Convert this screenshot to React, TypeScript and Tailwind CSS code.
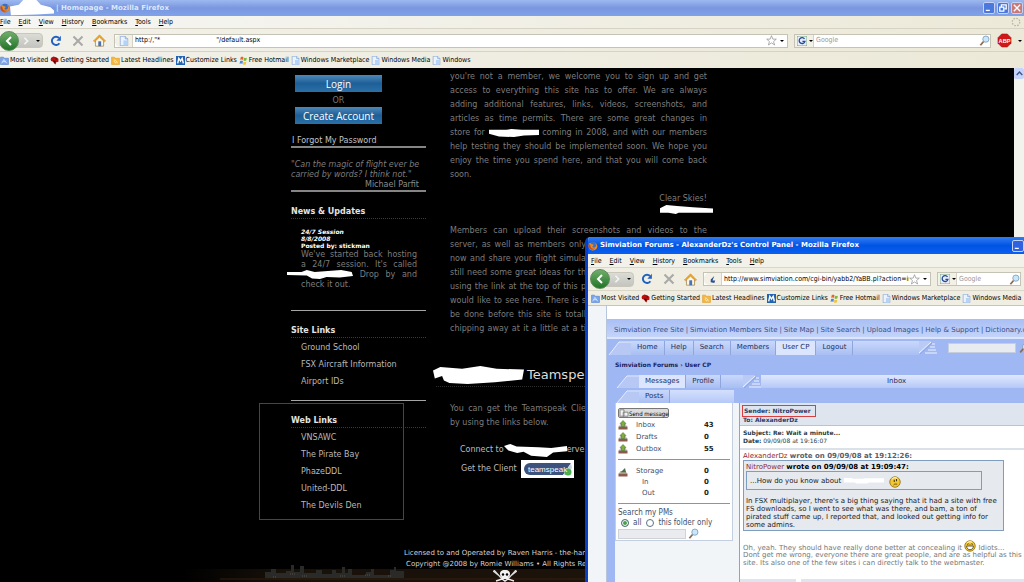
import React from 'react';

const MENU = ['File', 'Edit', 'View', 'History', 'Bookmarks', 'Tools', 'Help'];

const BOOKMARKS = [
  { label: 'Most Visited', icon: 'visited' },
  { label: 'Getting Started', icon: 'dino' },
  { label: 'Latest Headlines', icon: 'feed' },
  { label: 'Customize Links', icon: 'm' },
  { label: 'Free Hotmail', icon: 'flag' },
  { label: 'Windows Marketplace', icon: 'page' },
  { label: 'Windows Media', icon: 'page' },
  { label: 'Windows', icon: 'page' },
];

const SITE_LINKS = ['Ground School', 'FSX Aircraft Information', 'Airport IDs'];
const WEB_LINKS = ['VNSAWC', 'The Pirate Bay', 'PhazeDDL', 'United-DDL', 'The Devils Den'];

const FORUM_LINKS = ['Simviation Free Site', 'Simviation Members Site', 'Site Map', 'Site Search', 'Upload Images', 'Help & Support', 'Dictionary.c'];
const FORUM_TABS = ['Home', 'Help', 'Search', 'Members', 'User CP', 'Logout'];

const MEMBER_LINES = [
  'server, as well as members only',
  'now and share your flight simula',
  'still need some great ideas for th',
  'using the link at the top of this p',
  'would like to see here. There is s',
  'be done before this site is totall',
  'chipping away at it a little at a ti',
];

/* ---------- icons ---------- */

function FirefoxIcon() {
  return (
    <svg viewBox="0 0 16 16" className="size-[10px] shrink-0">
      <circle cx="8" cy="8" r="7" fill="#3b6fc4" />
      <path d="M2 3c2 0 3 1 4 2 2 0 3 1 3 2-1 1-2 1-2 2 1 2 4 2 6-1 0-2-1-4-2-5 3 1 4 4 4 6-1 4-4 6-8 6S1 12 1 8c0-2 0-3 1-5z" fill="#f08a1d" />
      <path d="M2 3c0 2 1 3 2 4 0 4 3 6 7 5-2 3-8 3-10-2C.500 7 1 5 2 3z" fill="#c8501a" />
    </svg>
  );
}

function BookmarkIcon({ name }: { name: string }) {
  const cls = 'size-[9px] shrink-0';
  switch (name) {
    case 'visited':
      return (
        <svg viewBox="0 0 16 16" className={cls}>
          <path d="M1 2h5l2 2h7v11H1z" fill="#7ba6ec" stroke="#4a78cf" />
          <path d="M3 13l4-7 5 7M5 10h5" stroke="#dce9ff" strokeWidth="1.500" fill="none" />
        </svg>
      );
    case 'dino':
      return (
        <svg viewBox="0 0 16 16" className={cls}>
          <path d="M2 3l4-2 5 1 4 3v5l-4 1-1 4-3-2-1-3-4-1-1-3z" fill="#b80f12" />
          <path d="M6 8l4 1-1 4-3-3z" fill="#3b0506" />
          <circle cx="11" cy="5" r="1" fill="#300" />
        </svg>
      );
    case 'feed':
      return (
        <svg viewBox="0 0 16 16" className={cls}>
          <path d="M1 2h5l1 2h8v11H1z" fill="#f6b73c" stroke="#dd9a26" />
          <path d="M5 7c4 0 6 3 6 6M5 10c2 0 3 1 3 3" stroke="#fff3d2" strokeWidth="1.500" fill="none" />
        </svg>
      );
    case 'm':
      return (
        <svg viewBox="0 0 16 16" className={cls}>
          <rect width="16" height="16" fill="#2263b0" />
          <path d="M3 13l2-9 3 5 3-5 2 9" stroke="#fff" strokeWidth="2.500" fill="none" />
        </svg>
      );
    case 'flag':
      return (
        <svg viewBox="0 0 16 16" className={cls}>
          <path d="M3 2c2-1 3-1 5 0L7 7c-2-1-3-1-5 0z" fill="#e8602c" />
          <path d="M9 3c2 1 3 1 5 0l-1 5c-2 1-3 1-5 0z" fill="#7cb93c" />
          <path d="M2 9c2-1 3-1 5 0l-1 5c-2-1-3-1-5 0z" fill="#4f86dc" />
          <path d="M8 10c2 1 3 1 5 0l-1 5c-2 1-3 1-5 0z" fill="#f2c23a" />
        </svg>
      );
    default:
      return <PageIcon className={cls} />;
  }
}

function PageIcon({ className = 'size-[10px] shrink-0' }: { className?: string }) {
  return (
    <svg viewBox="0 0 16 16" className={className}>
      <path d="M2 .500h8l4 4v11H2z" fill="#eaf3ff" stroke="#7196cf" />
      <path d="M7 15V7l7 0v8z" fill="#b6d2f7" />
      <path d="M10 .500v4h4" fill="#cfe1fa" stroke="#7196cf" />
    </svg>
  );
}

function SearchIcon({ className = 'size-[11px]' }: { className?: string }) {
  return (
    <svg viewBox="0 0 16 16" className={`${className} shrink-0`}>
      <path d="M7 9l-5 6" stroke="#8d6a4c" strokeWidth="2.500" />
      <circle cx="10" cy="6" r="4.500" fill="#c9e7fb" stroke="#7c9bb8" strokeWidth="1.200" />
    </svg>
  );
}

function Smiley({ grin }: { grin?: boolean }) {
  return (
    <svg viewBox="0 0 16 16" className="inline-block size-[12px] shrink-0 align-[-2px]">
      <circle cx="8" cy="8" r="7" fill="#f2c832" stroke="#8a6410" />
      <path d="M4 4c2-2 5-2 7-1" stroke="#fff2a8" strokeWidth="1.500" fill="none" />
      {grin ? (
        <>
          <path d="M3.500 8h9c0 3-2 5-4.500 5s-4.500-2-4.500-5z" fill="#fff" stroke="#3c2c08" />
          <path d="M4 6l2-1 1 1M9 6l1-1 2 1" stroke="#3c2c08" fill="none" />
        </>
      ) : (
        <>
          <path d="M7 5v3M10 4v3" stroke="#3c2c08" strokeWidth="1.300" />
          <path d="M6 12c1-1.500 3-1.500 5-1" stroke="#3c2c08" fill="none" />
        </>
      )}
    </svg>
  );
}

function Tray({ dark }: { dark?: boolean }) {
  return (
    <svg viewBox="0 0 20 20" className="size-[10px]">
      <path d="M1 13h18v6H1z" fill="#8c5a48" />
      <path d="M3 13l2-4h10l2 4z" fill="#d9d2c4" stroke="#777" />
      {dark ? <path d="M5 11l9-9 2 9z" fill="#4f6b4a" /> : <path d="M10 1l6 6h-3v6H7V7H4z" fill="#7fae3c" stroke="#3f6b1c" />}
    </svg>
  );
}

/* White brush stroke painted over names */
function Smudge({ className, d }: { className: string; d: string }) {
  return (
    <svg viewBox="0 0 100 20" preserveAspectRatio="none" className={className}>
      <path d={d} fill="#fff" />
    </svg>
  );
}

/* ---------- browser chrome ---------- */

function MenuBar({ className }: { className: string }) {
  return (
    <nav className={`flex shrink-0 items-center gap-[8px] text-[7px] text-black ${className}`}>
      {MENU.map((item) => (
        <button key={item} type="button" className="leading-[10px]">
          <span className="underline">{item[0]}</span>
          {item.slice(1)}
        </button>
      ))}
    </nav>
  );
}

function NavButtons() {
  return (
    <div className="flex shrink-0 items-center">
      <button type="button" aria-label="Back" className="relative z-10 grid size-[20px] place-items-center rounded-full border border-[#5b8a5b] bg-gradient-to-b from-[#6fae6c] to-[#1e7427]">
        <svg viewBox="0 0 10 10" className="size-[10px]">
          <path d="M7 1L3 5l4 4" stroke="#fff" strokeWidth="2" fill="none" />
        </svg>
      </button>
      <button type="button" aria-label="Forward" className="-ml-1 flex h-[15px] w-[28px] items-center gap-[6px] rounded-r-[4px] border border-[#c9c7bb] bg-gradient-to-b from-[#dcdcd6] to-[#c4c4c0] pl-[6px]">
        <svg viewBox="0 0 10 10" className="size-[8px]">
          <path d="M3 1l4 4-4 4" stroke="#f4f4f4" strokeWidth="2" fill="none" />
        </svg>
        <span className="border-x-2 border-t-2 border-x-transparent border-t-black" />
      </button>
      <button type="button" aria-label="Reload" className="ml-[7px]">
        <svg viewBox="0 0 16 16" className="size-[12px]">
          <path d="M12.500 11A5.500 5.500 0 1 1 12 4" stroke="#1f62c4" strokeWidth="2.600" fill="none" />
          <path d="M14.500 1v6.500H8.500z" fill="#1f62c4" />
        </svg>
      </button>
      <button type="button" aria-label="Stop" className="ml-[10px]">
        <svg viewBox="0 0 16 16" className="size-[12px]">
          <path d="M2 2l12 12M14 2L2 14" stroke="#a9a9a9" strokeWidth="2.800" />
        </svg>
      </button>
      <button type="button" aria-label="Home" className="ml-[9px]">
        <svg viewBox="0 0 16 16" className="size-[13px]">
          <path d="M3 8v7h10V8L8 3z" fill="#fbf6e6" stroke="#a88a58" />
          <path d="M8 1L.500 8.500l1.500 1L8 4l6 5.500 1.500-1z" fill="#f0a832" stroke="#c17c1c" strokeWidth=".600" />
          <rect x="6.500" y="9" width="3.500" height="6" fill="#4a72b4" />
        </svg>
      </button>
    </div>
  );
}

function AddressBar({ url, icon }: { url: string; icon: React.ReactNode }) {
  return (
    <div className="flex h-[14px] min-w-0 flex-1 items-center border border-[#c5c3b5] bg-white">
      <span className="flex h-full w-[18px] shrink-0 items-center justify-center rounded-l-[5px] border-r border-[#d5d2c4] bg-[#f3f1e6]">{icon}</span>
      <input aria-label="Address" readOnly value={url} className="min-w-0 flex-1 bg-transparent pl-[2px] text-[7px] text-black outline-none" />
      <svg viewBox="0 0 16 16" className="size-[11px] shrink-0">
        <path d="M8 1l2 5h5l-4 3.500 1.500 5L8 11.500 3.500 14.500l1.500-5L1 6h5z" fill="#fff" stroke="#8b8b8b" />
      </svg>
      <span className="mx-[3px] border-x-2 border-t-2 border-x-transparent border-t-black" />
    </div>
  );
}

function SearchBox({ className }: { className: string }) {
  return (
    <div className={`flex h-[14px] shrink-0 items-center border border-[#c5c3b5] bg-white ${className}`}>
      <span className="flex h-full w-[19px] items-center gap-[2px] border-r border-[#d5d2c4] bg-[#f3f1e6] pl-[2px]">
        <svg viewBox="0 0 12 12" className="size-[10px]">
          <rect width="12" height="12" fill="#e8eef8" stroke="#69a06b" />
          <path d="M9 3.500A3.500 3.500 0 1 0 9.500 6.500H6.500" stroke="#26479f" strokeWidth="1.600" fill="none" />
        </svg>
        <span className="border-x-2 border-t-2 border-x-transparent border-t-black" />
      </span>
      <input aria-label="Search" placeholder="Google" className="min-w-0 flex-1 pl-[2px] text-[7px] outline-none placeholder:text-[#9a9a9a]" />
      <SearchIcon />
    </div>
  );
}

function BookmarksBar({ items, className }: { items: typeof BOOKMARKS; className: string }) {
  return (
    <nav className={`flex shrink-0 items-center gap-[2px] text-[7px] text-black ${className}`}>
      {items.map((b) => (
        <a key={b.label} href="#" className="flex shrink-0 items-center gap-[1px] whitespace-nowrap">
          <BookmarkIcon name={b.icon} />
          {b.label}
        </a>
      ))}
    </nav>
  );
}

function WindowButton({ label, className, d }: { label: string; className: string; d: string }) {
  return (
    <button type="button" aria-label={label} className={`grid size-[12px] place-items-center rounded-[2px] border border-[#c4d3f5] ${className}`}>
      <svg viewBox="0 0 10 10" className="size-[8px]">
        <path d={d} stroke="#fff" strokeWidth="1.600" fill="none" />
      </svg>
    </button>
  );
}

/* ---------- squadron site ---------- */

function SideHeading({ children }: { children: React.ReactNode }) {
  return <h2 className="border-b border-dotted border-[#3a3a3a] pb-[1px] text-[8px] leading-[11px] font-bold text-[#e4e4e4]">{children}</h2>;
}

function LinkList({ items }: { items: string[] }) {
  return (
    <ul className="pt-[1px] pl-[10px] text-[#b9b9b9]">
      {items.map((l) => (
        <li key={l} className="h-[17px] leading-[17px]">
          <a href="#">{l}</a>
        </li>
      ))}
    </ul>
  );
}

function Sidebar() {
  return (
    <aside className="w-[135px] shrink-0 pt-[7px]">
      <div className="ml-[4px] flex w-[87px] flex-col items-center">
        <button type="button" className="h-[17px] w-full bg-gradient-to-b from-[#4d88b8] via-[#1d5f98] to-[#2c70a8] font-['Open_Sans',sans-serif] text-[10px] leading-[16px] text-white">Login</button>
        <span className="h-[15px] leading-[18px] text-[#7a7a7a]">OR</span>
        <button type="button" className="h-[17px] w-full bg-gradient-to-b from-[#4d88b8] via-[#1d5f98] to-[#2c70a8] font-['Open_Sans',sans-serif] text-[10px] leading-[16px] text-white">Create Account</button>
      </div>
      <a href="#" className="mt-[11px] block border-b-2 border-[#858585] pl-[1px] leading-[11px] text-[#c4c4c4]">I Forgot My Password</a>

      <blockquote className="mt-[12px] border-b-2 border-[#858585] leading-[10px] text-[#7d7d7d]">
        <p className="whitespace-nowrap italic">
          "Can the magic of flight ever be
          <br />
          carried by words? I think not."
        </p>
        <p className="pr-[7px] text-right text-[#8c8c8c]">Michael Parfit</p>
      </blockquote>

      <div className="mt-[14px]">
        <SideHeading>News &amp; Updates</SideHeading>
        <div className="mt-[9px] border-b border-[#a5a5a5] pr-[9px] pb-[20px] pl-[10px]">
          <div className="pb-[1px] text-[6px] leading-[7px] font-bold text-white">
            <p className="italic">24/7 Session</p>
            <p className="italic">8/8/2008</p>
            <p>Posted by: stickman</p>
          </div>
          <div className="leading-[10px] whitespace-nowrap text-[#7d7d7d] [text-align-last:justify]">
            <p>We've started back hosting</p>
            <p>a 24/7 session. It's called</p>
            <p className="flex justify-between">
              <Smudge className="-ml-[14px] h-[10px] w-[66px]" d="M0 4h22l8-4 12 4 20-2 20-2 16 4 2 8-20 3-20-1-10 4-12-1-8-6-30-1z" />
              <span>Drop</span>
              <span>by</span>
              <span>and</span>
            </p>
            <p className="text-left [text-align-last:left]">check it out.</p>
          </div>
        </div>
      </div>

      <div className="mt-[14px] border-b border-[#a5a5a5] pb-[10px]">
        <SideHeading>Site Links</SideHeading>
        <LinkList items={SITE_LINKS} />
      </div>

      <div className="relative mt-[14px]">
        <SideHeading>Web Links</SideHeading>
        <LinkList items={WEB_LINKS} />
        <div className="pointer-events-none absolute -top-[12px] -left-[32px] h-[117px] w-[145px] border border-[#a81c1c]" />
      </div>
    </aside>
  );
}

function SiteMain() {
  return (
    <main className="min-w-0 flex-1 pt-[2px] pl-[10px] text-[#7d7d7d]">
      <div className="w-[271px] pl-[14px]">
        <div className="leading-[14px] whitespace-nowrap [text-align-last:justify]">
          <p>you're not a member, we welcome you to sign up and get</p>
          <p>access to everything this site has to offer. We are always</p>
          <p>adding additional features, links, videos, screenshots, and</p>
          <p>articles as time permits. There are some great changes in</p>
          <p>
            store for <Smudge className="inline-block h-[8px] w-[50px] align-[-2px]" d="M0 2h35l10-2 20 2h35v13l-30 1-20 4-30-1-20-7z" /> coming in 2008, and with our members
          </p>
          <p>help testing they should be implemented soon. We hope you</p>
          <p>enjoy the time you spend here, and that you will come back</p>
          <p className="[text-align-last:left]">soon.</p>
        </div>
        <div className="mt-[11px] flex flex-col items-end">
          <p className="leading-[12px]">Clear Skies!</p>
          <Smudge className="-mr-[6px] h-[9px] w-[53px]" d="M0 7l12-7 20 2 30 3 38 3v9H35l-5 3-14-3H0z" />
        </div>
        <div className="mt-[10px] leading-[14px] whitespace-nowrap [text-align-last:justify]">
          <p>Members can upload their screenshots and videos to the</p>
          {MEMBER_LINES.map((l) => (
            <p key={l} className="w-[136px]">{l}</p>
          ))}
        </div>
      </div>

      <h1 className="mt-[27px] flex h-[24px] items-center gap-[3px] border-b border-dotted border-[#2e2e2e] text-[13px] text-[#dcdcdc]">
        <Smudge className="-ml-[3px] h-[18px] w-[91px] shrink-0" d="M0 5l8-4 24 2 20-3 18 3 30 1-2 11-30 3-30 2-20-1-6-3-2-5-8 3z" />
        Teamspeak
      </h1>

      <div className="w-[150px] pt-[15px] pl-[14px] whitespace-nowrap">
        <div className="leading-[14px] [text-align-last:justify]">
          <p>You can get the Teamspeak Clie</p>
          <p className="[text-align-last:left]">by using the links below.</p>
        </div>
        <p className="mt-[11px] flex h-[18px] items-center pl-[10px] text-[#bdbdbd]">
          <a href="#" className="flex items-center">
            Connect to
            <Smudge className="h-[13px] w-[63px] shrink-0" d="M0 3l10-3 10 4 35 1 20 1 25-3v8l-22 2-10 7-25-2-12-6-10 2-14-4z" />
            erve
          </a>
        </p>
        <p className="flex h-[20px] items-center gap-[4px] pl-[11px] text-[#bdbdbd]">
          Get the Client
          <span className="flex h-[18px] w-[53px] shrink-0 items-center bg-white pl-[2px]">
            <svg viewBox="0 0 50 16" className="h-[16px] w-[50px]">
              <path d="M7 2h41l-8 12H7a6 6 0 0 1 0-12z" fill="#3d527c" />
              <path d="M40 14l8-12 1 5-5 7z" fill="#c9d2e2" />
              <circle cx="45" cy="11" r="3.500" fill="#4bb04e" />
              <text x="5" y="11" fontSize="8" fill="#fff" fontFamily="Liberation Sans, sans-serif">teamspeak</text>
            </svg>
          </span>
        </p>
      </div>
    </main>
  );
}

function SiteFooter() {
  return (
    <footer className="relative h-[40px] shrink-0 text-[7px] text-[#d2d2d2]">
      <svg viewBox="0 0 1014 20" preserveAspectRatio="none" className="absolute inset-x-0 bottom-0 h-[20px] w-full">
        <defs>
          <linearGradient id="ground" x1="0" x2="1" y1="0" y2="0">
            <stop offset="0.180" stopColor="#000" />
            <stop offset="0.280" stopColor="#18110a" />
            <stop offset="0.600" stopColor="#1c130a" />
          </linearGradient>
        </defs>
        <rect y="7" width="1014" height="13" fill="url(#ground)" />
        <path d="M265 16v-6h6v-3h5v4h10v-2h5v-6h3v7h6v-6h4v7h12v-3h6v4h10v-4h4v3h6v-6h3v6h3v-4h4v6h14v-3h5v-3h3v6h16v-5h4v-3h2v4h8v7z" fill="#2a2a29" />
        <path d="M273 15h4M290 12h5M302 14h6M340 14h5M365 13h5M388 14h4" stroke="#57504a" strokeDasharray="1 1" />
        <path d="M220 17h790" stroke="#33210f" />
      </svg>
      <div className="relative mx-auto w-[432px] pl-[113px] whitespace-nowrap">
        <p className="pt-[5px] leading-[12px]">Licensed to and Operated by Raven Harris - the-han</p>
        <p className="pl-[2px] leading-[11px]">Copyright @2008 by Romie Williams • All Rights Res</p>
        <svg viewBox="0 0 24 12" className="ml-[89px] h-[12px] w-[24px]">
          <path d="M0 1l9 7M24 1l-9 7M1 0l8 9M23 0l-8 9" stroke="#ddd" strokeWidth="1.200" />
          <path d="M12 0c4 0 5 2 5 4s-1 3-2 3v2H9V7C8 7 7 6 7 4s1-4 5-4z" fill="#f2f2f2" />
          <circle cx="10" cy="4.500" r="1.200" fill="#000" />
          <circle cx="14" cy="4.500" r="1.200" fill="#000" />
          <path d="M3 11l6-2 3 2 3-2 6 2" stroke="#eee" strokeWidth="1.500" fill="none" />
        </svg>
      </div>
    </footer>
  );
}

/* ---------- forum window ---------- */

function Slant() {
  return (
    <svg viewBox="0 0 24 14" preserveAspectRatio="none" className="h-full w-[24px] shrink-0">
      <path d="M2 14L12 1h12v13z" fill="#b7c8f5" />
      <path d="M2 14L12 1h12" stroke="#e4ecff" fill="none" />
    </svg>
  );
}

function Stripes() {
  return (
    <svg viewBox="0 0 18 13" className="h-[13px] w-[18px] shrink-0">
      <path d="M0 0h12L0 13z" fill="#b9caf6" />
      <path d="M0 12L12 1M6 12h12M9 9h8M11 6h5M13 3h3" stroke="#eef3ff" fill="none" />
      <path d="M1 13L13 2" stroke="#7f97cc" strokeWidth=".500" />
    </svg>
  );
}

function Tab({ label, active }: { label: string; active?: boolean }) {
  return (
    <a href="#" className={`h-full border-r border-[#8fa6dd] px-[6px] leading-[13px] ${active ? 'bg-[#dbe5fd]' : 'bg-gradient-to-b from-[#c9d8fb] to-[#a9bff3]'}`}>
      {label}
    </a>
  );
}

function FolderRow({ label, count, tray, dark, className = 'h-[12px]' }: { label: string; count: string; tray?: boolean; dark?: boolean; className?: string }) {
  return (
    <tr className={className}>
      <td className="w-[18px] p-0">{tray && <Tray dark={dark} />}</td>
      <td className={`p-0 ${label === 'In' || label === 'Out' ? 'pl-[6px]' : ''}`}>
        <a href="#">{label}</a>
      </td>
      <td className="w-[26px] p-0 font-bold text-[#222]">{count}</td>
    </tr>
  );
}

function MessagesPanel() {
  return (
    <section className="w-[118px] shrink-0 self-start border border-t-0 border-[#c3cfe0] bg-white pb-[1px] pl-[2px] text-[7px] text-[#3f5068]">
      <button type="button" className="mt-[5px] flex h-[10px] w-[51px] items-center rounded-[2px] border border-[#777] bg-[#dcdcdc] font-['DejaVu_Sans_Condensed',sans-serif] text-[6px] whitespace-nowrap text-black">
        <svg viewBox="0 0 12 10" className="h-[8px] w-[10px] shrink-0">
          <path d="M1 1h5v8H1zM5 4h6v5H5z" fill="#f4f4f4" stroke="#777" />
        </svg>
        Send message
      </button>
      <div className="mt-[1px] mr-[2px] border-b border-[#8296b4] pb-[4px]">
        <table className="w-full border-collapse">
          <tbody>
            <FolderRow label="Inbox" count="43" tray />
            <FolderRow label="Drafts" count="0" tray />
            <FolderRow label="Outbox" count="55" tray />
          </tbody>
        </table>
      </div>
      <div className="mr-[2px] border-b border-[#8296b4] pt-[6px] pb-[4px]">
        <table className="w-full border-collapse">
          <tbody>
            <FolderRow label="Storage" count="0" tray dark className="h-[11px]" />
            <FolderRow label="In" count="0" className="h-[11px]" />
            <FolderRow label="Out" count="0" className="h-[11px]" />
          </tbody>
        </table>
      </div>
      <form className="pt-[4px] font-['DejaVu_Sans_Condensed',sans-serif] text-[8px] leading-[10px]">
        <p>Search my PMs</p>
        <div className="flex items-center gap-[5px] pl-[3px]">
          <label className="flex items-center gap-[4px]">
            <input type="radio" name="scope" defaultChecked className="size-[8px] appearance-none rounded-full border border-[#5b7285] bg-white checked:bg-[#49a04b] checked:shadow-[inset_0_0_0_1px_white]" />
            all
          </label>
          <label className="flex items-center gap-[4px] whitespace-nowrap">
            <input type="radio" name="scope" className="size-[8px] appearance-none rounded-full border border-[#5b7285] bg-white" />
            this folder only
          </label>
        </div>
        <div className="flex items-center gap-[2px]">
          <input aria-label="Search my PMs" className="h-[10px] w-[68px] border border-[#cfd3d8] bg-[#e9ebee]" />
          <SearchIcon />
        </div>
      </form>
    </section>
  );
}

function MessageView() {
  return (
    <article className="min-w-0 flex-1 border-l border-[#8fa5bd] bg-white text-[7px] whitespace-nowrap text-[#222]">
      <header className="border-b border-[#b9c4d2] bg-[#dfe5ee] pt-[2px] pl-[3px] text-[6px] font-bold text-[#2e3b66]">
        <p className="-ml-[1px] h-[12px] w-[74px] border border-[#d84040] pl-[1px] leading-[10px]">Sender: NitroPower</p>
        <p className="h-[8px] leading-[5px]">To: AlexanderDz</p>
      </header>
      <div className="border-b-2 border-[#dbe1e8] py-[3px] pl-[3px] text-[6px] leading-[8px] text-[#26404a]">
        <p className="font-bold">Subject: Re: Wait a minute...</p>
        <p>
          <b>Date:</b> 09/09/08 at 19:16:07
        </p>
      </div>
      <div className="pt-[2px] pl-[3px]">
        <p className="leading-[8px] text-[#55606c]">
          <a href="#" className="text-[#8e2a2a]">AlexanderDz</a> <b>wrote on 09/09/08 at 19:12:26:</b>
        </p>
        <blockquote className="w-[261px] border border-[#7f9dbf] bg-[#e6e9ee] px-[2px] pt-[2px]">
          <p className="leading-[8px] text-black">
            <a href="#" className="text-[#8e2a2a]">NitroPower</a> <b>wrote on 09/09/08 at 19:09:47:</b>
          </p>
          <blockquote className="flex h-[19px] w-[236px] items-center border border-[#7f9dbf] pt-[2px] pl-[3px]">
            ...How do you know about
            <Smudge className="mx-[3px] h-[7px] w-[42px]" d="M0 0h20v2h25l5-1h45v12H60l-5 3H30l-5-3H0z" />
            <Smiley />
          </blockquote>
          <p className="mt-[7px] pb-[1px] leading-[8px]">
            In FSX multiplayer, there's a big thing saying that it had a site with free
            <br />
            FS downloads, so I went to see what was there, and bam, a ton of
            <br />
            pirated stuff came up, I reported that, and looked out getting info for
            <br />
            some admins.
          </p>
        </blockquote>
        <div className="mt-[9px] leading-[8px] text-[#777]">
          <p className="h-[11px] leading-[12px]">
            Oh, yeah. They should have really done better at concealing it <Smiley grin /> Idiots...
          </p>
          <p>Dont get me wrong, everyone there are great people, and are as helpful as this</p>
          <p>site. Its also one of the few sites i can directly talk to the webmaster.</p>
        </div>
      </div>
      <div className="mt-[12px] flex h-[6px] gap-[5px]">
        <span className="w-[56px] bg-[#dfe5ee]" />
        <span className="flex-1 bg-[#dfe5ee]" />
      </div>
    </article>
  );
}

function ForumWindow() {
  return (
    <div className="absolute top-[237px] right-0 bottom-0 left-[585px] flex flex-col overflow-hidden rounded-tl-[5px] border-l-3 border-[#0a3fc8] bg-[#ece9d8] font-['DejaVu_Sans_Condensed',sans-serif]">
      <header className="flex h-[17px] shrink-0 items-center gap-[2px] bg-gradient-to-b from-[#2f7cf5] via-[#0054e3] to-[#0a5ff2] font-['DejaVu_Sans',sans-serif] text-[7px] font-bold text-white">
        <FirefoxIcon />
        <span className="flex-1 whitespace-nowrap">Simviation Forums - AlexanderDz's Control Panel - Mozilla Firefox</span>
        <WindowButton label="Minimize" className="bg-[#2f62e0]" d="M1 8h5" />
      </header>
      <MenuBar className="h-[13px] bg-[#f2f1ea] pl-[3px]" />
      <div className="flex h-[24px] shrink-0 items-center gap-[6px] border-y border-[#dad7c8] bg-[#f0eee2] pr-[3px] pl-[2px]">
        <NavButtons />
        <AddressBar url="http://www.simviation.com/cgi-bin/yabb2/YaBB.pl?action=im" icon={<svg viewBox="0 0 10 10" className="size-[9px]"><path d="M7 1L3 5v3l4 1 1-3-3 0z" fill="#2c4f94" /></svg>} />
        <SearchBox className="w-[84px]" />
      </div>
      <BookmarksBar items={BOOKMARKS.slice(0, 7)} className="h-[15px] border-b border-[#c8c5b5] bg-[#f0eee2] pl-[3px]" />

      <div className="min-h-0 flex-1 bg-[#f1f5f8] pl-[18px] font-['DejaVu_Sans',sans-serif]">
        <div className="flex h-full flex-col border-l border-[#b7c6dd] bg-[#9fb7f2]">
          <div className="h-[13px] shrink-0 bg-white" />
          <nav className="flex h-[20px] shrink-0 items-center border-b-2 border-[#dbe5fb] bg-gradient-to-b from-[#a9bff4] to-[#c3d3fa] pt-[4px] pl-[7px] text-[7px] whitespace-nowrap text-[#3a4f86]">
            {FORUM_LINKS.map((l, i) => (
              <React.Fragment key={l}>
                {i > 0 && <span className="px-[2px]">|</span>}
                <a href="#">{l}</a>
              </React.Fragment>
            ))}
          </nav>
          <nav className="mt-[2px] flex h-[14px] shrink-0 items-stretch overflow-hidden text-[7px] text-[#22305c]">
            <Slant />
            {FORUM_TABS.map((t) => (
              <Tab key={t} label={t} active={t === 'User CP'} />
            ))}
            <span className="w-[66px] bg-gradient-to-b from-[#c9d8fb] to-[#a9bff3]" />
            <Stripes />
            <span className="flex flex-1 items-center justify-end gap-[3px]">
              <input aria-label="Search forum" className="h-[10px] w-[68px] border border-[#c4cede] bg-[#e8ebf0]" />
              <SearchIcon className="-mr-[5px] size-[10px]" />
            </span>
          </nav>
          <p className="h-[20px] shrink-0 pl-[8px] text-[6px] leading-[20px] font-bold text-[#1c2460]">Simviation Forums › User CP</p>
          <div className="flex h-[13px] shrink-0 pl-[8px] text-[7px] text-[#22305c]">
            <Slant />
            <Tab label="Messages" active />
            <Tab label="Profile" />
            <span className="w-[22px] bg-gradient-to-b from-[#c9d8fb] to-[#a9bff3]" />
            <Stripes />
            <h2 className="flex-1 bg-gradient-to-b from-[#dfe8fd] to-[#b5c8f7] pl-[8px] text-center leading-[12px]">Inbox</h2>
          </div>
          <div className="mt-[2px] flex h-[13px] shrink-0 pl-[8px] text-[7px] text-[#22305c]">
            <Slant />
            <Tab label="Posts" />
            <span className="w-[64px] bg-gradient-to-b from-[#d3dffc] to-[#b5c8f7]" />
          </div>
          <div className="min-h-0 flex-1 pl-[8px]">
            <div className="flex h-full gap-[6px] bg-[#f1f5f8]">
              <MessagesPanel />
              <MessageView />
            </div>
          </div>
        </div>
      </div>
    </div>
  );
}

export default function App() {
  return (
    <div className="relative flex h-screen flex-col overflow-hidden bg-[#ece9d8] font-['DejaVu_Sans_Condensed',sans-serif]">
      <header className="flex h-[16px] shrink-0 items-center bg-gradient-to-b from-[#9db9f0] via-[#7a96df] to-[#7ea3ea] font-['DejaVu_Sans',sans-serif] text-[7px] font-bold text-[#dde8fc]">
        <FirefoxIcon />
        <Smudge className="-mt-[1px] h-[16px] w-[44px]" d="M0 8l20-2 10-6 30 0 10 6 22 3 8 4v4L60 18l-58 1z" />
        <span className="flex-1 pl-[2px]">| Homepage - Mozilla Firefox</span>
        <span className="flex gap-[2px] pr-[1px]">
          <WindowButton label="Minimize" className="bg-[#4a78dd]" d="M1 8h5" />
          <WindowButton label="Restore" className="bg-[#4a78dd]" d="M3 3V1h6v5H7M1 4h5v5H1z" />
          <WindowButton label="Close" className="bg-[#c97a78]" d="M1 1l8 8M9 1L1 9" />
        </span>
      </header>
      <div className="flex shrink-0 items-center justify-between border-b border-[#d6d3c4] bg-gradient-to-r from-[#f6f6f4] to-[#ece9d8] pr-[3px]">
        <MenuBar className="h-[12px]" />
        <svg viewBox="0 0 12 12" className="size-[10px]">
          <circle cx="6" cy="6" r="4.500" stroke="#b9b6a6" strokeWidth="1.500" strokeDasharray="2 1.500" fill="none" />
        </svg>
      </div>
      <div className="flex h-[23px] shrink-0 items-center gap-[6px] border-b border-[#d6d3c4] bg-gradient-to-r from-[#f2f1ea] to-[#ece9d8] pt-[1px] pr-[2px]">
        <div className="-ml-[1px] pr-[2px]">
          <NavButtons />
        </div>
        <AddressBar url={'http:/,"*                            "/default.aspx'} icon={<PageIcon />} />
        <SearchBox className="w-[197px]" />
        <svg viewBox="0 0 16 16" className="size-[15px] shrink-0">
          <path d="M5 1h6l4 4v6l-4 4H5l-4-4V5z" fill="#d01818" stroke="#8f0d0d" strokeWidth=".500" />
          <text x="8" y="10.500" textAnchor="middle" fontSize="6" fontWeight="bold" fill="#fff" fontFamily="Liberation Sans, sans-serif">ABP</text>
        </svg>
        <span className="border-x-2 border-t-2 border-x-transparent border-t-black" />
      </div>
      <BookmarksBar items={BOOKMARKS} className="h-[16px] bg-gradient-to-r from-[#f2f1ea] to-[#ece9d8]" />

      <div className="flex min-h-0 flex-1">
        <div className="flex min-w-0 flex-1 flex-col overflow-hidden bg-black font-['DejaVu_Sans',sans-serif] text-[8px]">
          <div className="mx-auto flex min-h-0 w-[432px] flex-1">
            <Sidebar />
            <SiteMain />
          </div>
          <SiteFooter />
        </div>
        <div className="w-[10px] shrink-0 bg-[#f3f3ee]">
          <button type="button" aria-label="Scroll up" className="grid h-[11px] w-full place-items-center rounded-[2px] bg-[#c4d4fb]">
            <svg viewBox="0 0 10 10" className="size-[7px]">
              <path d="M1 7l4-4 4 4" stroke="#40548c" strokeWidth="2" fill="none" />
            </svg>
          </button>
        </div>
      </div>

      <ForumWindow />
    </div>
  );
}
